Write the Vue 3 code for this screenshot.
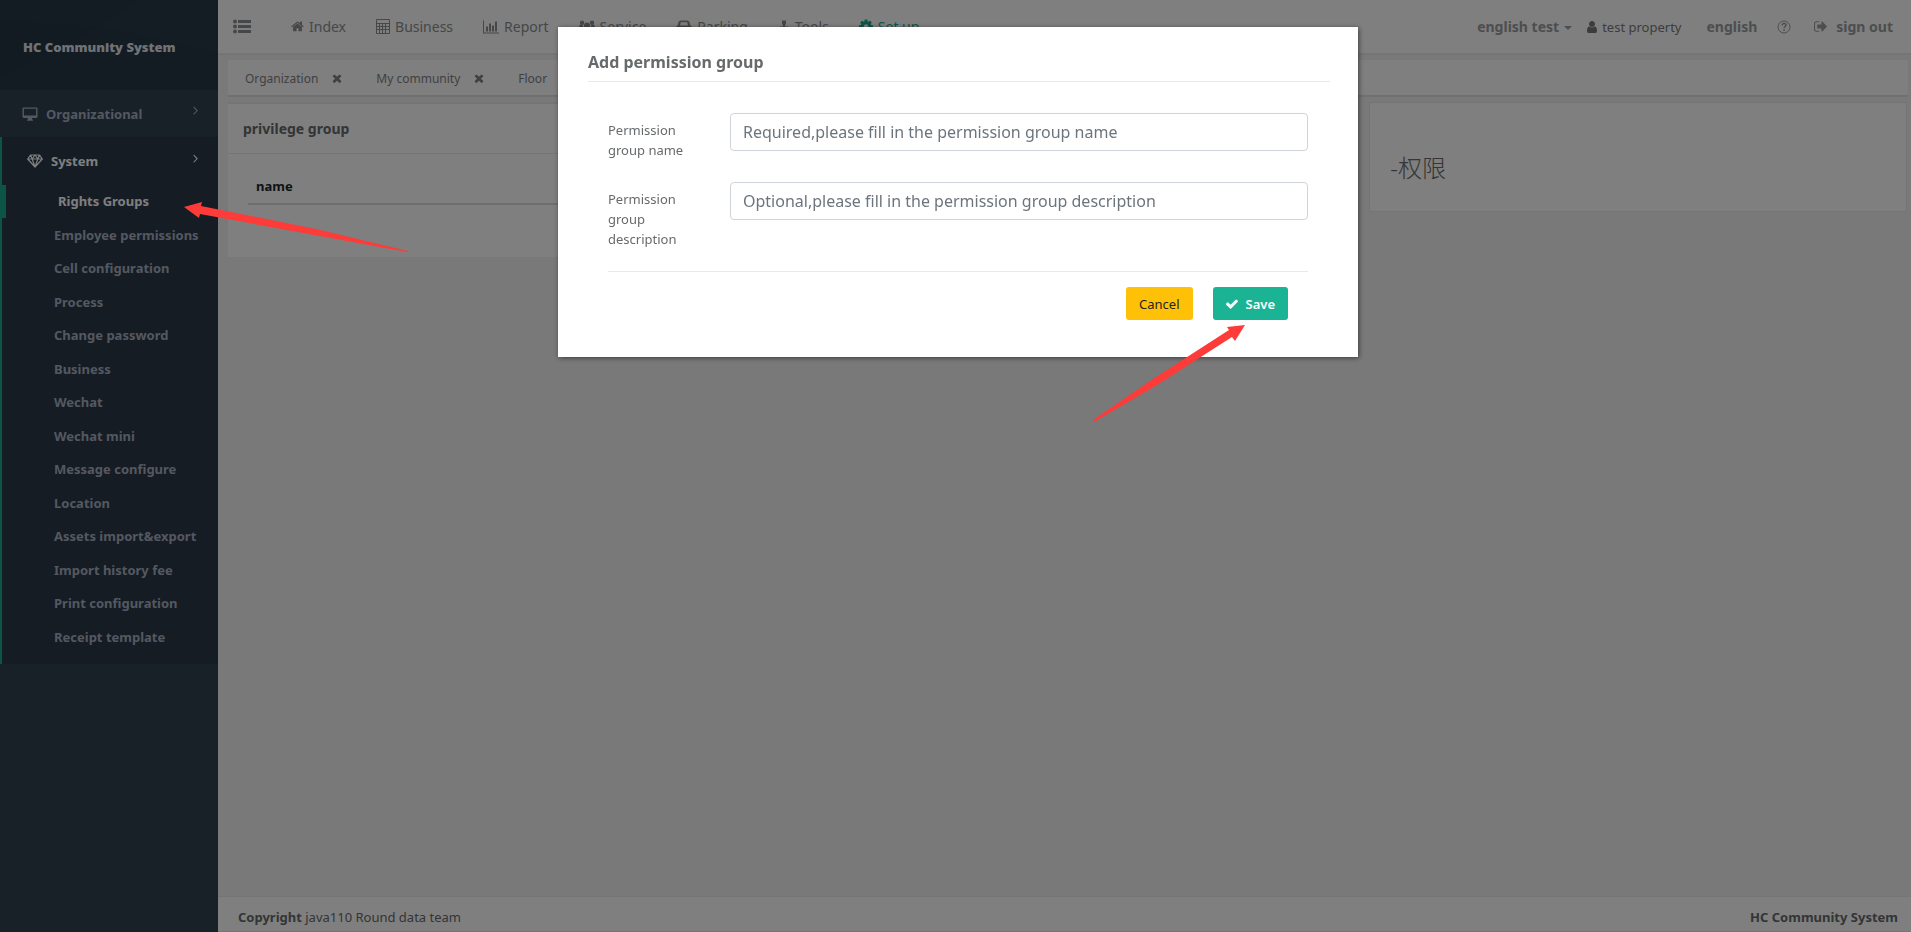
<template>
  <div class="layout">
    <!-- 左侧菜单 -->
    <aside class="sidebar">
      <div class="sidebar__header">
        <svg class="sidebar__pattern" viewBox="0 0 218 90" preserveAspectRatio="none" aria-hidden="true">
          <path d="M0 20L98 27L0 78Z" fill="#273645" />
          <path d="M98 27L140 0H218V52Z" fill="#293a48" />
          <path d="M98 27L218 52L208 90H154L115 48Z" fill="#273847" />
        </svg>
        <strong class="sidebar__title">HC Community System</strong>
      </div>
      <nav>
        <a href="#" class="menu">
          <svg class="menu__icon" viewBox="0 0 16 14"><path d="M1.6.5h12.8q1.1 0 1.1 1.1v8.2q0 1.1-1.1 1.1H10v1.2l1 .9v.7H5V13l1-.9v-1.2H1.600q-1.100 0-1.100-1.100V1.600Q.5.5 1.600.5zM1.900 1.800v6.700h12.200V1.800z" fill-rule="evenodd" /></svg>
          <span>Organizational</span>
          <svg class="menu__arrow" viewBox="550 400 640 1080"><path :d="icons.angle" /></svg>
        </a>
        <div class="menu-group">
          <a href="#" class="menu menu--open">
            <svg class="menu__icon" viewBox="0 0 16 14"><path d="M3.500 1h9L15.300 5 8 13 .7 5zM.7 5h14.600M3.500 1l1.700 4L8 1l2.800 4 1.700-4M5.200 5L8 13l2.800-8" fill="none" stroke="currentColor" stroke-width="1.200" stroke-linejoin="round" /></svg>
            <span>System</span>
            <svg class="menu__arrow" viewBox="550 400 640 1080"><path :d="icons.angle" /></svg>
          </a>
          <ul class="submenu">
            <li v-for="item in subMenus" :key="item" :class="{ active: item === current }">
              <a href="#" @click.prevent="current = item">{{ item }}</a>
            </li>
          </ul>
        </div>
      </nav>
    </aside>

    <div class="main">
      <!-- 顶部导航 -->
      <header class="topbar">
        <button type="button" class="toggle" aria-label="menu">
          <svg viewBox="0 0 18 15"><path d="M5 1h13v3H5zM5 6h13v3H5zM5 11h13v3H5z" /><circle cx="2" cy="2.500" r="2" /><circle cx="2" cy="7.500" r="2" /><circle cx="2" cy="12.500" r="2" /></svg>
        </button>
        <nav class="topnav">
          <a v-for="nav in navs" :key="nav.name" href="#" :class="{ on: nav.name === 'Set up' }">
            <svg :style="{ width: nav.width + 'px' }" :viewBox="nav.box"><path :d="nav.icon" fill-rule="evenodd" /></svg>{{ nav.name }}
          </a>
        </nav>
        <div class="tools">
          <a href="#" class="community">english test<i class="caret"></i></a>
          <span class="user"><svg viewBox="256 128 1280 1536"><path :d="icons.user" /></svg>test property</span>
          <a href="#" class="lang">english</a>
          <a href="#" class="help" aria-label="help">
            <svg viewBox="0 0 14 14"><circle cx="7" cy="7" r="6" fill="none" stroke="currentColor" /><path d="M5 5.500q.2-2 2.100-2 2 0 2 1.600 0 1-1.100 1.600-.9.500-.9 1.500" fill="none" stroke="currentColor" stroke-width="1.400" /><path d="M6.300 9.200h1.600v1.500H6.300z" /></svg>
          </a>
          <a href="#" class="logout"><svg viewBox="64 256 1568 1280"><path :d="icons.signOut" /></svg>sign out</a>
        </div>
      </header>

      <!-- 已打开的标签页 -->
      <div class="tabs">
        <div v-for="tab in tabs" :key="tab" class="tab">
          <a href="#">{{ tab }}</a>
          <button type="button" :aria-label="'close ' + tab">
            <svg viewBox="302 302 1188 1252"><path :d="icons.times" /></svg>
          </button>
        </div>
      </div>

      <main class="content">
        <section class="card card--group">
          <h5>privilege group</h5>
          <div class="card__body">
            <table>
              <thead>
                <tr><th>name</th></tr>
              </thead>
            </table>
          </div>
        </section>
        <section class="card card--detail">
          <h2>-权限</h2>
        </section>
      </main>

      <footer class="footer">
        <span><strong>Copyright</strong> java110 Round data team</span>
        <strong>HC Community System</strong>
      </footer>
    </div>

    <!-- 新增权限组弹窗 -->
    <div class="mask">
      <form class="modal" role="dialog" aria-labelledby="modal-title" @submit.prevent>
        <h3 id="modal-title">Add permission group</h3>
        <div class="modal__body">
          <div class="field">
            <label for="group-name">Permission group name</label>
            <input id="group-name" v-model="form.name" type="text" placeholder="Required,please fill in the permission group name">
          </div>
          <div class="field">
            <label for="group-desc">Permission group description</label>
            <input id="group-desc" v-model="form.description" type="text" placeholder="Optional,please fill in the permission group description">
          </div>
          <div class="actions">
            <button type="button" class="btn btn--cancel">Cancel</button>
            <button type="submit" class="btn btn--save">
              <svg viewBox="121 298 1550 1224"><path :d="icons.check" /></svg>Save
            </button>
          </div>
        </div>
      </form>
    </div>

    <!-- 操作指引箭头 -->
    <svg class="guide guide--menu" viewBox="0 0 224 51"><path d="M0 5L18 0L17 4L132 27L224 49L223 50L130 33L16 12L15 16Z" /></svg>
    <svg class="guide guide--save" viewBox="0 0 152 97"><path d="M152 0L134 2L136 5L60 54L0 95L1 97L64 60L139 12L142 16Z" /></svg>
  </div>
</template>

<script setup>
import { reactive, ref } from 'vue'

const current = ref('Rights Groups')
const form = reactive({ name: '', description: '' })

const icons = {
  angle: 'M1171 960q0 13-10 23l-466 466q-10 10-23 10t-23-10l-50-50q-10-10-10-23t10-23l393-393-393-393q-10-10-10-23t10-23l50-50q10-10 23-10t23 10l466 466q10 10 10 23z',
  user: 'M1536 1399q0 109-62.500 187t-150.500 78h-854q-88 0-150.500-78t-62.500-187q0-85 8.500-160.500t31.500-152 58.500-131 94-89 134.500-34.500q131 128 313 128t313-128q76 0 134.500 34.500t94 89 58.500 131 31.500 152 8.500 160.500zm-256-887q0 159-112.500 271.500t-271.500 112.500-271.500-112.500-112.500-271.500 112.500-271.500 271.500-112.500 271.500 112.500 112.500 271.500z',
  signOut: 'M704 1440q0 4 1 20t.5 26.500-3 23.500-10 19.500-20.500 6.500h-320q-119 0-203.500-84.500t-84.500-203.500v-704q0-119 84.500-203.500t203.500-84.500h320q13 0 22.500 9.500t9.500 22.500q0 4 1 20t.5 26.500-3 23.500-10 19.500-20.500 6.500h-320q-66 0-113 47t-47 113v704q0 66 47 113t113 47h312l11.500 1 11.500 3 8 5.500 7 9 2 13.500zm928-544q0 26-19 45l-544 544q-19 19-45 19t-45-19-19-45v-288h-448q-26 0-45-19t-19-45v-384q0-26 19-45t45-19h448v-288q0-26 19-45t45-19 45 19l544 544q19 19 19 45z',
  times: 'M1490 1322q0 40-28 68l-136 136q-28 28-68 28t-68-28l-294-294-294 294q-28 28-68 28t-68-28l-136-136q-28-28-28-68t28-68l294-294-294-294q-28-28-28-68t28-68l136-136q28-28 68-28t68 28l294 294 294-294q28-28 68-28t68 28l136 136q28 28 28 68t-28 68l-294 294 294 294q28 28 28 68z',
  check: 'M1671 566q0 40-28 68l-724 724-136 136q-28 28-68 28t-68-28l-136-136-362-362q-28-28-28-68t28-68l136-136q28-28 68-28t68 28l294 295 656-657q28-28 68-28t68 28l136 136q28 28 28 68z'
}

/* 顶部导航 */
const navs = [
  {
    name: 'Index',
    width: 13,
    box: '50 240 1692 1340',
    icon: 'M1472 992v480q0 26-19 45t-45 19h-384v-384h-256v384h-384q-26 0-45-19t-19-45v-480q0-1 .5-3t.5-3l575-474 575 474q1 2 1 6zm223-69l-62 74q-8 9-21 11h-3q-13 0-21-7l-692-577-692 577q-12 8-24 7-13-2-21-11l-62-74q-8-10-7-23.500t11-21.500l719-599q32-26 76-26t76 26l244 204v-195q0-14 9-23t23-9h192q14 0 23 9t9 23v408l219 182q10 8 11 21.500t-7 23.500z'
  },
  {
    name: 'Business',
    width: 14,
    box: '0 0 14 15',
    icon: 'M1 0h12q1 0 1 1v13q0 1-1 1H1q-1 0-1-1V1q0-1 1-1zM1 1v3h12V1zM1 5v2h2V5zM4 5v2h2V5zM7 5v2h2V5zM10 5v2h3V5zM1 8v2h2V8zM4 8v2h2V8zM7 8v2h2V8zM10 8v2h3V8zM1 11v3h2v-3zM4 11v3h2v-3zM7 11v3h2v-3zM10 11v3h3v-3z'
  },
  {
    name: 'Report',
    width: 16,
    box: '0 0 16 14',
    icon: 'M0 1h1v12h15v1H0zM3 7h2v5H3zM6 4h2v8H6zM9 6h2v6H9zM12 2h2v10h-2z'
  },
  {
    name: 'Service',
    width: 16,
    box: '0 0 16 14',
    icon: 'M8 3a3 3 0 1 1 0 6 3 3 0 0 1 0-6zM3 1a2.200 2.200 0 1 1 0 4.400A2.200 2.200 0 0 1 3 1zM13 1a2.200 2.200 0 1 1 0 4.400A2.200 2.200 0 0 1 13 1zM0 9q0-4 2-4l2 1q.2 2 1 3zM16 9q0-4-2-4l-2 1q-.2 2-1 3zM3 12q0-4 2.500-4.500 2.500 2 5 0Q13 8 13 12q0 2-2 2H5q-2 0-2-2z'
  },
  {
    name: 'Parking',
    width: 16,
    box: '0 0 16 14',
    icon: 'M4.500 1h7q1.500 0 2 1.500L14.300 6q1.700.5 1.700 2v3h-1v2h-3v-2H4v2H1v-2H0V8q0-1.500 1.700-2l.8-3.500Q3 1 4.500 1zM4.800 2.800L4 6h8l-.8-3.200z'
  },
  {
    name: 'Tools',
    width: 12,
    box: '0 0 12 14',
    icon: 'M4 1h4v4H7v2h3v3h2v4H8v-4H4v4H0v-4h2V7h3V5H4z'
  },
  {
    name: 'Set up',
    width: 14,
    box: '128 128 1536 1536',
    icon: 'M1152 896q0-106-75-181t-181-75-181 75-75 181 75 181 181 75 181-75 75-181zm512-109v222q0 12-8 23t-20 13l-185 28q-19 54-39 91 35 50 107 138 10 12 10 25t-9 23q-27 37-99 108t-94 71q-12 0-26-9l-138-108q-44 23-91 38-16 136-29 186-7 28-36 28h-222q-14 0-24.500-8.500t-11.500-21.500l-28-184q-49-16-90-37l-141 107q-10 9-25 9-14 0-25-11-126-114-165-168-7-10-7-23 0-12 8-23 15-21 51-66.500t54-70.500q-27-50-41-99l-183-27q-13-2-21-12.500t-8-23.500v-222q0-12 8-23t19-13l186-28q14-46 39-92-40-57-107-138-10-12-10-24 0-10 9-23 26-36 98.500-107.500t94.500-71.500q13 0 26 10l138 107q44-23 91-38 16-136 29-186 7-28 36-28h222q14 0 24.500 8.500t11.500 21.500l28 184q49 16 90 37l142-107q9-9 24-9 13 0 25 10 129 119 165 170 7 8 7 22 0 12-8 23-15 21-51 66.500t-54 70.500q26 50 41 98l183 28q13 2 21 12.500t8 23.500z'
  }
]

const tabs = ['Organization', 'My community', 'Floor']

const subMenus = [
  'Rights Groups',
  'Employee permissions',
  'Cell configuration',
  'Process',
  'Change password',
  'Business',
  'Wechat',
  'Wechat mini',
  'Message configure',
  'Location',
  'Assets import&export',
  'Import history fee',
  'Print configuration',
  'Receipt template'
]
</script>

<style>
body {
  margin: 0;
  background: #f3f3f4;
}
</style>

<style scoped>
.layout {
  display: flex;
  min-height: 100vh;
  color: #676a6c;
  font-family: "Noto Sans", "Noto Sans CJK SC", sans-serif;
  font-size: 13px;
}
.layout * {
  box-sizing: border-box;
}
a {
  color: inherit;
  text-decoration: none;
}
svg {
  display: block;
  flex: none;
  fill: currentColor;
}
button {
  padding: 0;
  border: 0;
  background: none;
  color: inherit;
  font: inherit;
}

/* 左侧菜单 */
.sidebar {
  flex: none;
  width: 218px;
  background: #334250;
  color: #a7b1c2;
  font-weight: 700;
}
.sidebar__header {
  position: relative;
  display: flex;
  align-items: center;
  height: 90px;
  padding: 4px 23px 0;
  background: #263747;
}
.sidebar__pattern {
  position: absolute;
  inset: 0;
  width: 100%;
  height: 100%;
}
.sidebar__title {
  position: relative;
  color: #dfe4ed;
}
.menu {
  display: flex;
  align-items: center;
  gap: 8px;
  height: 47px;
  padding: 0 20px 0 22px;
}
.menu--open {
  height: 48px;
  color: #fff;
  padding-left: 25px;
}
.menu__icon {
  width: 16px;
  height: 14px;
}
.menu__arrow {
  width: 5px;
  height: 9px;
  margin: 0 0 6px auto;
}
.menu-group {
  padding-bottom: 10px;
  border-left: 2px solid #19aa8d;
  background: #2b3846;
}
.submenu {
  margin: 0;
  padding: 0;
  list-style: none;
}
.submenu li {
  padding-left: 52px;
  line-height: 33px;
  white-space: nowrap;
}
.submenu li:nth-child(even) {
  line-height: 34px;
}
.submenu li.active {
  border-left: 4px solid #19aa8d;
  color: #fff;
}
.submenu a {
  display: block;
}

/* 主体 */
.main {
  display: flex;
  flex: 1;
  flex-direction: column;
  min-width: 0;
}
.topbar {
  display: flex;
  align-items: center;
  height: 55px;
  padding: 0 18px 0 15px;
  border-bottom: 2px solid #e7eaec;
  background: #fff;
  color: #8b8e90;
}
.toggle svg {
  width: 18px;
  height: 15px;
}
.topnav {
  display: flex;
  gap: 30px;
  margin-left: 40px;
  font-size: 14px;
}
.topnav a {
  display: flex;
  align-items: center;
  gap: 5px;
}
.topnav svg {
  height: 15px;
}
.topnav .on {
  color: #19aa8d;
}
.tools {
  display: flex;
  align-items: center;
  margin-left: auto;
  color: #999c9e;
  font-size: 14px;
  font-weight: 700;
}
.caret {
  display: inline-block;
  margin-left: 5px;
  border: 4px solid transparent;
  border-top-color: currentColor;
  border-bottom: 0;
  vertical-align: middle;
}
.user {
  display: flex;
  align-items: center;
  gap: 5px;
  margin: 0 25px 0 15px;
  color: #77797b;
  font-size: 13px;
  font-weight: 400;
}
.user svg {
  width: 10px;
  height: 12px;
}
.help {
  margin: 0 23px 0 20px;
}
.help svg {
  width: 14px;
  height: 14px;
}
.logout {
  display: flex;
  align-items: center;
  gap: 9px;
}
.logout svg {
  width: 13px;
  height: 11px;
}

.tabs {
  display: flex;
  gap: 34px;
  height: 37px;
  margin: 5px 3px 5px 10px;
  padding: 2px 17px 0;
  border-bottom: 2px solid #e0e1e3;
  background: #fff;
  color: #808284;
  font-size: 12px;
}
.tab {
  display: flex;
  align-items: center;
  gap: 14px;
}
.tab svg {
  width: 10px;
  height: 9px;
}

.content {
  display: grid;
  flex: 1;
  grid-template-columns: minmax(0, 21fr) minmax(0, 10fr);
  align-items: start;
  gap: 12px;
  padding: 0 4px 0 10px;
}
.card {
  background: #fff;
}
.card--group {
  min-height: 155px;
  border-top: 2px solid #e7eaec;
}
.card h5 {
  margin: 0;
  padding: 15px;
  border-bottom: 1px solid #e7eaec;
  font-size: 14px;
  font-weight: 700;
  line-height: 19px;
}
.card__body {
  padding: 14px 20px;
}
table {
  width: 100%;
  border-collapse: collapse;
}
th {
  padding: 8px 8px 7px;
  border-bottom: 2px solid #ddd;
  color: #212529;
  font-weight: 700;
  line-height: 20px;
  text-align: left;
}
.card--detail {
  padding: 50px 20px 28px;
  border: 1px solid #e7eaec;
}
.card--detail h2 {
  margin: 0;
  font-size: 24px;
  font-weight: 300;
  line-height: 30px;
}

.footer {
  display: flex;
  justify-content: space-between;
  padding: 11px 13px 5px 20px;
  border-top: 1px solid #e7eaec;
  border-bottom: 1px solid #e7eaec;
  background: #fff;
  line-height: 18px;
}
.footer strong {
  font-weight: 700;
}

/* 弹窗 */
.mask {
  position: fixed;
  inset: 0;
  padding: 27px 0 0 5px;
  background: rgba(0, 0, 0, .5);
}
.modal {
  width: 800px;
  max-width: 100%;
  margin: 0 auto;
  padding: 22px 28px 37px 30px;
  background: #fff;
  box-shadow: 1px 1px 5px rgba(0, 0, 0, .5);
}
.modal h3 {
  margin: 0;
  padding-bottom: 6px;
  border-bottom: 1px solid #e7eaec;
  font-size: 16px;
  font-weight: 700;
  line-height: 26px;
}
.modal__body {
  padding: 31px 22px 0 20px;
}
.field {
  display: flex;
  align-items: flex-start;
  min-height: 54px;
  margin-bottom: 15px;
}
.field label {
  width: 92px;
  margin-right: 30px;
  padding-top: 7px;
  line-height: 20px;
}
.field input {
  flex: 1;
  height: 38px;
  padding: 0 12px;
  border: 1px solid #ced4da;
  border-radius: 4px;
  color: #495057;
  font: inherit;
  font-size: 16px;
}
.field input::placeholder {
  color: #6c757d;
  opacity: 1;
}
.actions {
  display: flex;
  justify-content: flex-end;
  gap: 20px;
  margin-top: 22px;
  padding: 15px 20px 0 0;
  border-top: 1px solid #e7eaec;
}
.btn {
  display: flex;
  align-items: center;
  height: 33px;
  padding: 0 13px;
  border-radius: 3px;
}
.btn--cancel {
  background: #ffc107;
  color: #212529;
}
.btn--save {
  gap: 8px;
  background: #1ab394;
  color: #fff;
  font-weight: 600;
}
.btn--save svg {
  width: 12px;
  height: 10px;
}

/* 指引箭头 */
.guide {
  position: fixed;
  fill: #fd3b39;
}
.guide--menu {
  top: 202px;
  left: 184px;
  width: 224px;
}
.guide--save {
  top: 325px;
  left: 1093px;
  width: 152px;
}
</style>
